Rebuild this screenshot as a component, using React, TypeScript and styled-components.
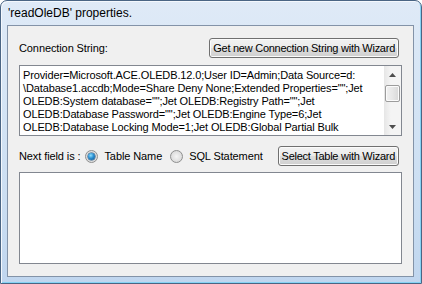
import styled, { createGlobalStyle } from 'styled-components';

const GlobalStyle = createGlobalStyle`
  html, body {
    margin: 0;
    padding: 0;
    background: #ffffff;
  }
  body {
    width: 422px;
    height: 284px;
    overflow: hidden;
    font-family: 'Liberation Sans', Arial, sans-serif;
  }
`;

const connectionLines = [
  'Provider=Microsoft.ACE.OLEDB.12.0;User ID=Admin;Data Source=d:',
  '\\Database1.accdb;Mode=Share Deny None;Extended Properties="";Jet',
  'OLEDB:System database="";Jet OLEDB:Registry Path="";Jet',
  'OLEDB:Database Password="";Jet OLEDB:Engine Type=6;Jet',
  'OLEDB:Database Locking Mode=1;Jet OLEDB:Global Partial Bulk',
];

const App = () => {
  return (
    <>
      <GlobalStyle />
      <Window>
        <TitleBar>'readOleDB' properties.</TitleBar>
        <Client>
          <Row>
            <Label>Connection String:</Label>
            <Button>Get new Connection String with Wizard</Button>
          </Row>
          <TextBox $height={71}>
            <TextLines>
              {connectionLines.map((line) => (
                <Line key={line}>{line}</Line>
              ))}
            </TextLines>
            <ScrollBar>
              <ArrowButton>
                <svg width="7" height="4" viewBox="0 0 7 4">
                  <path d="M0 4 L3.5 0 L7 4 Z" fill="#4d4d4d" />
                </svg>
              </ArrowButton>
              <Track>
                <Thumb />
              </Track>
              <ArrowButton>
                <svg width="7" height="4" viewBox="0 0 7 4">
                  <path d="M0 0 L3.5 4 L7 0 Z" fill="#4d4d4d" />
                </svg>
              </ArrowButton>
            </ScrollBar>
          </TextBox>
          <Row $gap={10}>
            <Label>Next field is :</Label>
            <RadioOption $left={5}>
              <Radio $checked />
              Table Name
            </RadioOption>
            <RadioOption $left={8}>
              <Radio />
              SQL Statement
            </RadioOption>
            <Button>Select Table with Wizard</Button>
          </Row>
          <TextBox $height={92} $gap={6} />
        </Client>
      </Window>
    </>
  );
};

const Window = styled.div`
  box-sizing: border-box;
  width: 422px;
  height: 284px;
  display: flex;
  flex-direction: column;
  padding: 0 7px 6px 6px;
  border: 1px solid #4a6584;
  border-radius: 7px 7px 0 0;
  background: linear-gradient(180deg, #dfeaf7 0%, #d6e5f5 30%, #cbdef2 70%, #c0d6ef 100%);
  box-shadow: inset 1px 1px 0 #f4f8fd, inset -1px -1px 0 #86d3f4;
`;

const TitleBar = styled.div`
  height: 24px;
  display: flex;
  align-items: center;
  padding-left: 1px;
  font-size: 12px;
  color: #000000;
`;

const Client = styled.div`
  flex: 1;
  display: flex;
  flex-direction: column;
  padding: 12px 11px 0 11px;
  border: 1px solid #8393a8;
  background: #f0f0f0;
`;

const Row = styled.div<{ $gap?: number }>`
  height: 20px;
  display: flex;
  align-items: center;
  margin-top: ${({ $gap }) => $gap || 0}px;
`;

const Label = styled.span`
  font-size: 11px;
  letter-spacing: -0.1px;
  color: #000000;
  white-space: nowrap;
`;

const Button = styled.div`
  box-sizing: border-box;
  height: 20px;
  display: flex;
  align-items: center;
  padding: 0 3px;
  margin-left: auto;
  margin-right: 3px;
  font-size: 11px;
  letter-spacing: -0.26px;
  white-space: nowrap;
  color: #000000;
  border: 1px solid #707070;
  border-radius: 3px;
  background: linear-gradient(180deg, #f2f2f2 0%, #ebebeb 48%, #dddddd 52%, #cfcfcf 100%);
  box-shadow: inset 0 0 0 1px #fbfbfb;
`;

const TextBox = styled.div<{ $height: number; $gap?: number }>`
  box-sizing: border-box;
  height: ${({ $height }) => $height}px;
  margin-top: ${({ $gap }) => $gap ?? 7}px;
  display: flex;
  border: 1px solid #828790;
  background: #ffffff;
`;

const TextLines = styled.div`
  flex: 1;
  padding: 3px 0 0 3px;
  overflow: hidden;
  font-size: 11px;
  line-height: 13px;
  letter-spacing: -0.13px;
  color: #000000;
`;

const Line = styled.div`
  white-space: nowrap;
`;

const ScrollBar = styled.div`
  width: 17px;
  display: flex;
  flex-direction: column;
  background: linear-gradient(90deg, #e6e6e6, #f4f4f4 40%, #f4f4f4);
`;

const ArrowButton = styled.div`
  height: 17px;
  display: flex;
  align-items: center;
  justify-content: center;
`;

const Track = styled.div`
  flex: 1;
  padding: 2px 1px 0 1px;
`;

const Thumb = styled.div`
  height: 15px;
  border: 1px solid #9c9c9c;
  border-radius: 2px;
  background: linear-gradient(90deg, #f1f1f1 0%, #e7e7e7 50%, #d8d8d8 100%);
  box-shadow: inset 0 0 0 1px #fbfbfb;
`;

const RadioOption = styled.label<{ $left: number }>`
  display: flex;
  align-items: center;
  gap: 6px;
  margin-left: ${({ $left }) => $left}px;
  font-size: 11px;
  letter-spacing: -0.1px;
  color: #000000;
  white-space: nowrap;
`;

const Radio = styled.span<{ $checked?: boolean }>`
  box-sizing: border-box;
  width: 13px;
  height: 13px;
  border-radius: 50%;
  border: 1px solid #8e8f8f;
  background: radial-gradient(circle at 50% 50%, #f4f4f4 0%, #dcdcdc 70%, #cfcfcf 100%);
  display: flex;
  align-items: center;
  justify-content: center;
  &::after {
    content: '';
    display: ${({ $checked }) => ($checked ? 'block' : 'none')};
    width: 7px;
    height: 7px;
    border-radius: 50%;
    background: radial-gradient(circle at 40% 35%, #8fe0ff 0%, #2b8fd1 45%, #0c4c86 100%);
    box-shadow: 0 0 0 0.5px #1a4f7a;
  }
`;

export default App;
